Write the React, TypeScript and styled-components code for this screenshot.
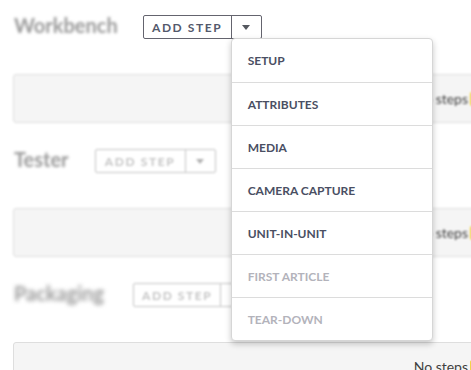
import React from "react";
import styled, { createGlobalStyle } from "styled-components";

const GlobalStyle = createGlobalStyle`
  html, body { margin: 0; padding: 0; background: #ffffff; overflow: hidden; }
  body { font-family: Lato, "Open Sans", "Liberation Sans", sans-serif; }
`;

const Page = styled.div`
  width: 530px;
  padding: 15px 0 0 13px;
  display: flex;
  flex-direction: column;
  gap: 26px;
`;

const Section = styled.section`
  display: flex;
  flex-direction: column;
  gap: 35px;
`;

const HeaderRow = styled.div<{ $gap: number }>`
  display: flex;
  align-items: center;
  height: 24px;
  gap: ${(p) => p.$gap}px;
  padding-left: 1px;
`;

const Title = styled.h2<{ $blur: number }>`
  margin: 0 0 4px 0;
  font-size: 20px;
  font-weight: 700;
  color: #9a9a9a;
  filter: blur(${(p) => p.$blur}px);
`;

const SplitButton = styled.div<{ $blur: number; $faded?: boolean }>`
  position: relative;
  display: flex;
  height: 24px;
  box-sizing: border-box;
  border: 1px solid ${(p) => (p.$faded ? "#c4c4c4" : "#64646e")};
  border-radius: 2px;
  filter: ${(p) => (p.$blur ? `blur(${p.$blur}px)` : "none")};
`;

const MainButton = styled.button<{ $w: number; $faded?: boolean }>`
  all: unset;
  width: ${(p) => p.$w}px;
  display: flex;
  align-items: center;
  justify-content: center;
  font-family: Lato, "Open Sans", sans-serif;
  font-size: 12px;
  font-weight: 700;
  letter-spacing: 1.6px;
  color: ${(p) => (p.$faded ? "#c4c4c4" : "#53596c")};
`;

const CaretButton = styled.button<{ $faded?: boolean }>`
  all: unset;
  width: 29px;
  display: flex;
  align-items: center;
  justify-content: center;
  border-left: 1px solid ${(p) => (p.$faded ? "#c4c4c4" : "#64646e")};
`;

const Caret = styled.span<{ $faded?: boolean }>`
  width: 0;
  height: 0;
  border-left: 4px solid transparent;
  border-right: 4px solid transparent;
  border-top: 5px solid ${(p) => (p.$faded ? "#b0b0b0" : "#55585f")};
`;

const Menu = styled.ul`
  position: absolute;
  top: 100%;
  left: 87px;
  width: 202px;
  margin: 0;
  padding: 0;
  list-style: none;
  background: #ffffff;
  border: 1px solid #d6d6d6;
  border-radius: 4px;
  box-shadow: 0 3px 6px rgba(0, 0, 0, 0.22);
  z-index: 10;
  box-sizing: border-box;
  overflow: hidden;
`;

const MenuItem = styled.li<{ $disabled?: boolean }>`
  height: 43px;
  box-sizing: border-box;
  display: flex;
  align-items: center;
  padding-left: 16px;
  font-size: 12px;
  font-weight: 700;
  color: ${(p) => (p.$disabled ? "#b3b3bb" : "#4a4f63")};
  border-top: 1px solid #dcdcdc;
  &:first-child { border-top: none; height: 43px; }
`;

const StepsBox = styled.div<{ $blur: number }>`
  height: 49px;
  box-sizing: border-box;
  background: #f5f5f5;
  border: 1px solid #dedede;
  border-radius: 3px;
  display: flex;
  align-items: center;
  justify-content: flex-end;
  padding-right: 32px;
  gap: 2px;
  filter: ${(p) => (p.$blur ? `blur(${p.$blur}px)` : "none")};
`;

const EmptyText = styled.span`
  font-size: 14px;
  color: #3f3f3f;
`;

const Badge = styled.span`
  width: 40px;
  height: 14px;
  background: #f3d34a;
  border-radius: 2px;
`;

const menuItems = [
  { label: "SETUP" },
  { label: "ATTRIBUTES" },
  { label: "MEDIA" },
  { label: "CAMERA CAPTURE" },
  { label: "UNIT-IN-UNIT" },
  { label: "FIRST ARTICLE", disabled: true },
  { label: "TEAR-DOWN", disabled: true },
];

const sections = [
  { title: "Workbench", gap: 25, titleBlur: 1.6, btnBlur: 0, boxBlur: 1, mainW: 87, faded: false, menu: true },
  { title: "Tester", gap: 26, titleBlur: 1.6, btnBlur: 1.2, boxBlur: 1, mainW: 89, faded: true, menu: false },
  { title: "Packaging", gap: 29, titleBlur: 2, btnBlur: 1.2, boxBlur: 0, mainW: 86, faded: true, menu: false },
];

export default function App() {
  return (
    <>
      <GlobalStyle />
      <Page>
        {sections.map((s) => (
          <Section key={s.title}>
            <HeaderRow $gap={s.gap}>
              <Title $blur={s.titleBlur}>{s.title}</Title>
              <SplitButton $blur={s.btnBlur} $faded={s.faded}>
                <MainButton $w={s.mainW} $faded={s.faded}>ADD STEP</MainButton>
                <CaretButton $faded={s.faded}>
                  <Caret $faded={s.faded} />
                </CaretButton>
                {s.menu && (
                  <Menu>
                    {menuItems.map((m) => (
                      <MenuItem key={m.label} $disabled={m.disabled}>
                        {m.label}
                      </MenuItem>
                    ))}
                  </Menu>
                )}
              </SplitButton>
            </HeaderRow>
            <StepsBox $blur={s.boxBlur}>
              <EmptyText>No steps</EmptyText>
              <Badge />
            </StepsBox>
          </Section>
        ))}
      </Page>
    </>
  );
}
